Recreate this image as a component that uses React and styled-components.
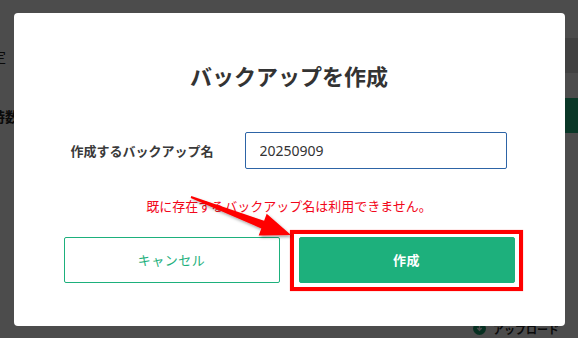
import styled, { createGlobalStyle } from 'styled-components';

const GlobalStyle = createGlobalStyle`
  html, body {
    margin: 0;
    padding: 0;
  }
  body {
    font-family: "Noto Sans CJK JP", "Noto Sans", sans-serif;
  }
  * {
    box-sizing: border-box;
  }
`;

export default function App() {
  return (
    <>
      <GlobalStyle />
      <Page>
        <TopBar />
        <PageRow>
          <EdgeText>設定</EdgeText>
          <SideCell color="#d9d9d9" />
        </PageRow>
        <Spacer />
        <PageRow>
          <EdgeText bold width="19px">労働時数</EdgeText>
          <SideCell color="#22b884" />
        </PageRow>
        <BottomBar>
          <UploadIcon>
            <svg width="13" height="13" viewBox="0 0 13 13">
              <circle cx="6.5" cy="6.5" r="6.5" fill="#1a9e70" />
              <path d="M6.5 3v5M4.3 6l2.2 2.3L8.7 6" stroke="#fff" strokeWidth="1.4" fill="none" />
            </svg>
          </UploadIcon>
          <UploadText>アップロード</UploadText>
        </BottomBar>

        <Overlay>
          <Modal>
            <Title>バックアップを作成</Title>
            <FormRow>
              <FieldLabel>作成するバックアップ名</FieldLabel>
              <NameInput defaultValue="20250909" />
            </FormRow>
            <ErrorText>既に存在するバックアップ名は利用できません。</ErrorText>
            <ButtonRow>
              <ActionButton>キャンセル</ActionButton>
              <Highlight>
                <ActionButton primary>作成</ActionButton>
              </Highlight>
            </ButtonRow>
          </Modal>
        </Overlay>

        <Annotation width="578" height="338" viewBox="0 0 578 338">
          <defs>
            <filter id="arrowShadow" x="-20%" y="-50%" width="140%" height="200%">
              <feDropShadow dx="1.5" dy="2" stdDeviation="1.5" floodColor="#000" floodOpacity="0.35" />
            </filter>
          </defs>
          <polygon
            points="191.3,196.1 264.1,220.8 266.7,213.8 291,235 258.7,235.4 261.3,228.4 190.7,197.9"
            fill="#ff0000"
            filter="url(#arrowShadow)"
          />
        </Annotation>
      </Page>
    </>
  );
}

const Page = styled.div`
  position: relative;
  width: 578px;
  height: 338px;
  overflow: hidden;
  background: #ffffff;
  display: flex;
  flex-direction: column;
`;

const TopBar = styled.div`
  height: 38px;
`;

const PageRow = styled.div`
  display: flex;
  align-items: center;
  height: 35px;
`;

const Spacer = styled.div`
  height: 25px;
`;

const EdgeText = styled.div`
  width: ${({ width }) => width || '6px'};
  display: flex;
  justify-content: flex-end;
  white-space: nowrap;
  font-size: 14px;
  font-weight: ${({ bold }) => (bold ? 700 : 400)};
  color: #222;
`;

const SideCell = styled.div`
  margin-left: auto;
  width: 90px;
  height: 100%;
  background: ${({ color }) => color};
`;

const BottomBar = styled.div`
  margin-top: auto;
  height: 22px;
  display: flex;
  align-items: center;
  justify-content: flex-end;
  padding-right: 19px;
  padding-top: 3px;
`;

const UploadIcon = styled.span`
  display: flex;
  margin-right: 7px;
`;

const UploadText = styled.span`
  font-size: 11px;
  font-weight: 700;
  color: #222;
`;

const Overlay = styled.div`
  position: absolute;
  inset: 0;
  background: rgba(0, 0, 0, 0.7);
  display: flex;
  align-items: center;
  justify-content: center;
`;

const Modal = styled.div`
  width: 551px;
  height: 313px;
  background: #ffffff;
  border-radius: 4px;
  display: flex;
  flex-direction: column;
  align-items: center;
`;

const Title = styled.h2`
  margin: 46px 0 0;
  font-size: 22px;
  line-height: 32px;
  font-weight: 700;
  color: #333;
`;

const FormRow = styled.div`
  align-self: stretch;
  display: flex;
  align-items: center;
  margin-top: 41px;
  padding-left: 57px;
`;

const FieldLabel = styled.label`
  width: 174px;
  font-size: 13px;
  font-weight: 700;
  color: #3a3a3a;
`;

const NameInput = styled.input`
  width: 262px;
  height: 37px;
  border: 1px solid #2d64a6;
  border-radius: 2px;
  padding: 0 14px;
  font-family: "Noto Sans", "Noto Sans CJK JP", sans-serif;
  font-size: 14px;
  color: #333;
  outline: none;
`;

const ErrorText = styled.p`
  margin: 28px 0 0;
  font-size: 13px;
  line-height: 18px;
  color: #f2071b;
`;

const ButtonRow = styled.div`
  display: flex;
  gap: 19px;
  margin-top: 22px;
`;

const Highlight = styled.div`
  position: relative;

  &::after {
    content: '';
    position: absolute;
    top: -7px;
    left: -9px;
    right: -8px;
    bottom: -8px;
    border: 4px solid #ff0000;
    box-shadow: 0 0 1px rgba(255, 0, 0, 0.5);
    pointer-events: none;
  }
`;

const ActionButton = styled.button`
  width: 216px;
  height: 46px;
  border-radius: 2px;
  border: 1px solid #1db07c;
  background: ${({ primary }) => (primary ? '#1db07c' : '#ffffff')};
  color: ${({ primary }) => (primary ? '#ffffff' : '#1db07c')};
  font-family: "Noto Sans CJK JP", sans-serif;
  font-size: 13px;
  font-weight: ${({ primary }) => (primary ? 700 : 400)};
  letter-spacing: 0.5px;
  cursor: pointer;
`;

const Annotation = styled.svg`
  position: absolute;
  inset: 0;
  pointer-events: none;
`;
